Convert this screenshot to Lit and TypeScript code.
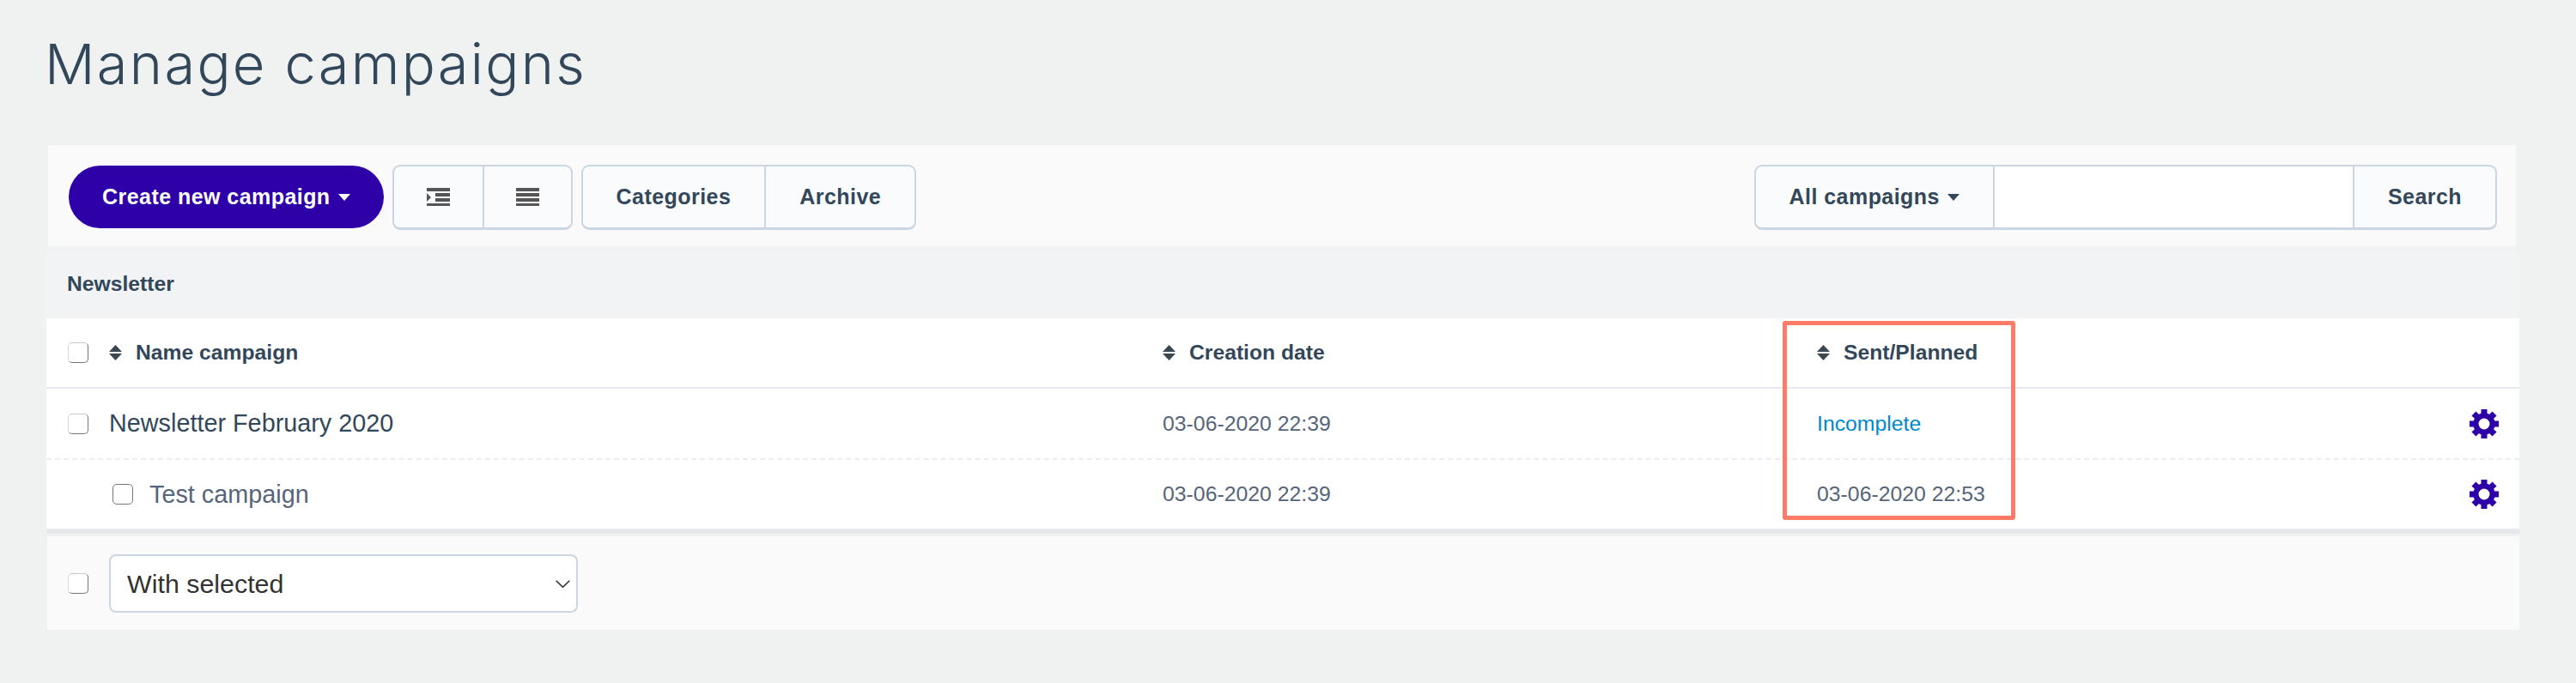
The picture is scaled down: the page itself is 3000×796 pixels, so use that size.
import { LitElement, html, css, svg } from 'lit';
import { customElement } from 'lit/decorators.js';

const rows = [
	{ name: 'Newsletter February 2020', date: '03-06-2020 22:39', sent: 'Incomplete', child: false },
	{ name: 'Test campaign', date: '03-06-2020 22:39', sent: '03-06-2020 22:53', child: true }
];

const gear = html`<svg class="gear" viewBox="0 0 34 34" width="34" height="34" aria-label="Settings">
	${[0, 45, 90, 135, 180, 225, 270, 315].map(
		(a) => svg`<rect x="13.5" y="0" width="7" height="8" transform="rotate(${a} 17 17)" fill="#2e00a8"></rect>`
	)}
	<circle cx="17" cy="17" r="9.6" fill="none" stroke="#2e00a8" stroke-width="6.2"></circle>
</svg>`;

const sortIcon = html`<svg class="sort" viewBox="0 0 15 18" width="15" height="18">
	<path d="M7.5 0L15 8H0z M0 10h15L7.5 18z" fill="#3a4650"></path>
</svg>`;

const indentIcon = html`<svg viewBox="0 0 27 21" width="27" height="21">
	<path d="M0 0h27v4H0z M10 6h17v4H10z M10 12h17v4H10z M0 18h27v3H0z M0 6l5 5-5 5z" fill="#555"></path>
</svg>`;

const listIcon = html`<svg viewBox="0 0 27 21" width="27" height="21">
	<path d="M0 0h27v4H0z M0 6h27v4H0z M0 12h27v4H0z M0 18h27v3H0z" fill="#555"></path>
</svg>`;

@customElement('app-root')
export class AppRoot extends LitElement {
	static styles = css`
		:host {
			display: block;
			position: relative;
			width: 3000px;
			height: 796px;
			box-sizing: border-box;
			padding: 0 66px 0 54px;
			background: #f0f2f1;
			font-family: 'Liberation Sans', Arial, sans-serif;
			color: #33475b;
			overflow: hidden;
		}

		h1 {
			height: 169px;
			margin: 0 0 0 -2px;
			box-sizing: border-box;
			padding-top: 34px;
			font-family: Inter, sans-serif;
			font-size: 65px;
			line-height: 82px;
			font-weight: 300;
			letter-spacing: 2.3px;
			color: #33475b;
		}

		.toolbar {
			display: flex;
			align-items: flex-start;
			gap: 10px;
			height: 118px;
			box-sizing: border-box;
			margin: 0 4px 4px 2px;
			padding: 23px 22px 0 24px;
			background: #fafafa;
		}

		button {
			font-family: inherit;
			font-size: 25px;
			font-weight: 700;
			letter-spacing: 0.45px;
			color: #33475b;
			background: none;
			border: 0;
			padding: 0 39px;
			height: 100%;
			display: flex;
			align-items: center;
			white-space: nowrap;
		}

		.create {
			height: 73px;
			margin-top: 1px;
			border-radius: 37px;
			background: #2e00a8;
			color: #fff;
		}

		.caret {
			display: inline-block;
			margin-left: 9px;
			border-top: 8px solid currentColor;
			border-left: 7.5px solid transparent;
			border-right: 7.5px solid transparent;
		}

		.group {
			display: flex;
			height: 76px;
			box-sizing: border-box;
			border: 2px solid #cbd6e2;
			border-bottom-width: 3px;
			border-radius: 9px;
			background: #fafbfc;
		}

		.group > * + * {
			border-left: 2px solid #cbd6e2;
		}

		.group .icon {
			width: 103px;
			padding: 0;
			justify-content: center;
		}

		.search-group {
			margin-left: auto;
		}

		.search-group input {
			width: 419px;
			box-sizing: border-box;
			border-top: 0;
			border-right: 0;
			border-bottom: 0;
			background: #fff;
			outline: none;
		}

		.table {
			border-bottom: 6px solid #e6e8eb;
			background: #fff;
		}

		.section {
			display: flex;
			align-items: center;
			height: 80px;
			padding-left: 24px;
			background: #f1f3f5;
			font-size: 24.7px;
			font-weight: 700;
		}

		.row {
			display: grid;
			grid-template-columns: 1275px 762px 1fr auto;
			align-items: center;
			padding: 0 24px 0 25px;
			font-size: 24.8px;
		}

		.row.head {
			height: 80px;
			border-bottom: 2px solid #e8eaef;
			font-size: 24.7px;
			font-weight: 700;
		}

		.row.item {
			height: 81px;
			color: #56657a;
		}

		.row.item + .row.item {
			height: 80px;
			border-top: 2px dashed #ececec;
		}

		.cell {
			display: flex;
			align-items: center;
		}

		.sort {
			margin-right: 16px;
		}

		.name {
			font-size: 28.8px;
			gap: 24px;
			color: #33475b;
		}

		.name.child {
			margin-left: 52px;
			gap: 19px;
			color: #56657a;
		}

		.head .name {
			font-size: 24.7px;
		}

		.incomplete {
			color: #0088cc;
		}

		input[type='checkbox'] {
			appearance: none;
			flex: none;
			width: 24px;
			height: 24px;
			margin: 0;
			box-sizing: border-box;
			border: 1px solid #767676;
			border-radius: 5px;
			background: #fff;
		}

		input.faint {
			border-top-color: #c9c9c9;
			border-left-color: #d9d9d9;
		}

		.gear {
			display: block;
		}

		.footer {
			display: flex;
			align-items: center;
			gap: 24px;
			height: 109px;
			box-sizing: border-box;
			margin: 3px 0 0 1px;
			padding-left: 24px;
			background: #fafafa;
		}

		.select-wrap {
			position: relative;
			display: block;
		}

		.select-wrap svg {
			position: absolute;
			right: 9px;
			top: 30px;
			pointer-events: none;
		}

		select {
			display: block;
			appearance: none;
			width: 546px;
			height: 68px;
			box-sizing: border-box;
			border: 2px solid #cbd6e2;
			border-radius: 8px;
			padding-left: 19px;
			background-color: #fff;
			font-family: inherit;
			font-size: 30.4px;
			color: #333;
		}

		.highlight {
			position: absolute;
			left: 2076px;
			top: 374px;
			width: 271px;
			height: 232px;
			box-sizing: border-box;
			border: 5.5px solid #ff7b67;
			border-radius: 3px;
			pointer-events: none;
		}
	`;

	render() {
		return html`
			<h1>Manage campaigns</h1>

			<div class="toolbar">
				<button class="create">Create new campaign<span class="caret"></span></button>
				<div class="group">
					<button class="icon">${indentIcon}</button>
					<button class="icon">${listIcon}</button>
				</div>
				<div class="group">
					<button>Categories</button>
					<button>Archive</button>
				</div>
				<div class="group search-group">
					<button>All campaigns<span class="caret"></span></button>
					<input type="text" />
					<button>Search</button>
				</div>
			</div>

			<div class="table">
				<div class="section">Newsletter</div>
				<div class="row head">
					<div class="cell name">
						<input type="checkbox" class="faint" />
						<span class="cell">${sortIcon}Name campaign</span>
					</div>
					<div class="cell">${sortIcon}Creation date</div>
					<div class="cell">${sortIcon}Sent/Planned</div>
					<div></div>
				</div>
				${rows.map(
					(r) => html`<div class="row item">
						<div class="cell name ${r.child ? 'child' : ''}">
							<input type="checkbox" class="${r.child ? '' : 'faint'}" />
							${r.name}
						</div>
						<div>${r.date}</div>
						<div class="${r.sent === 'Incomplete' ? 'incomplete' : ''}">${r.sent}</div>
						${gear}
					</div>`
				)}
			</div>

			<div class="footer">
				<input type="checkbox" class="faint" />
				<span class="select-wrap">
					<select>
						<option>With selected</option>
					</select>
					<svg viewBox="0 0 17 9" width="17" height="9">
						<path d="M.7.7L8.5 8.3 16.3.7" fill="none" stroke="#333" stroke-width="1.6"></path>
					</svg>
				</span>
			</div>

			<div class="highlight"></div>
		`;
	}
}
